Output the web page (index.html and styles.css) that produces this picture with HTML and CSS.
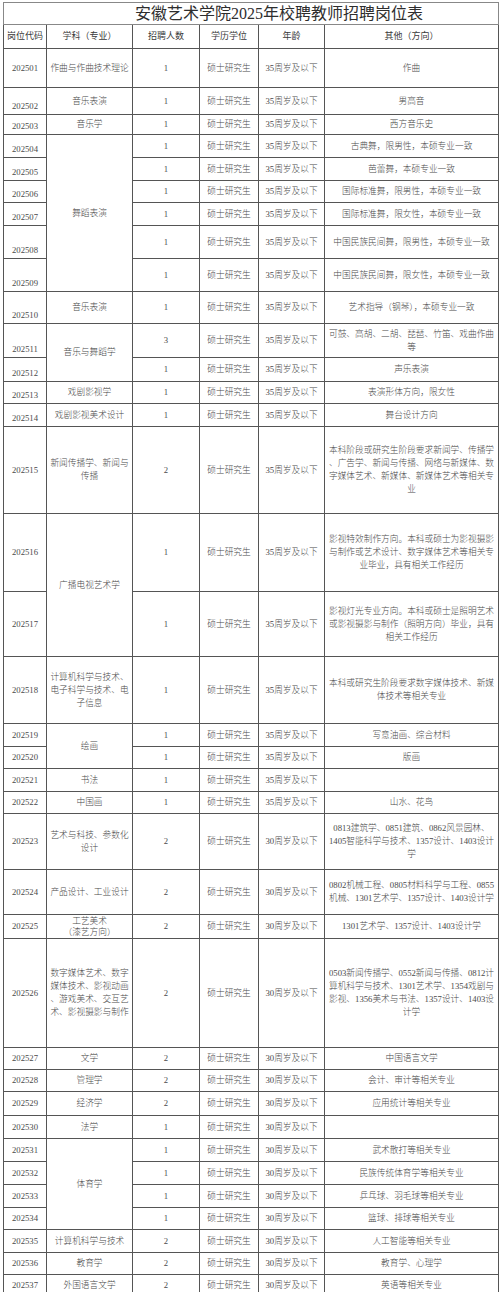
FILE: index.html
```html
<!DOCTYPE html>
<html lang="zh-CN">
<head>
<meta charset="utf-8">
<title>安徽艺术学院2025年校聘教师招聘岗位表</title>
<link rel="stylesheet" href="styles.css">
</head>
<body>
<table class="jobs">
<colgroup>
<col class="c-code"><col class="c-subj"><col class="c-num"><col class="c-deg"><col class="c-age"><col class="c-other">
</colgroup>
<tr class="h22 title-row"><td colspan="6" class="title">安徽艺术学院2025年校聘教师招聘岗位表</td></tr>
<tr class="h24 head"><td>岗位代码</td><td>学科（专业）</td><td>招聘人数</td><td>学历学位</td><td>年龄</td><td>其他（方向）</td></tr>
<tr class="h39"><td>202501</td><td>作曲与作曲技术理论</td><td>1</td><td>硕士研究生</td><td>35周岁及以下</td><td>作曲</td></tr>
<tr class="h27"><td class="bot">202502</td><td>音乐表演</td><td>1</td><td>硕士研究生</td><td>35周岁及以下</td><td>男高音</td></tr>
<tr class="h20"><td class="bot">202503</td><td>音乐学</td><td>1</td><td>硕士研究生</td><td>35周岁及以下</td><td>西方音乐史</td></tr>
<tr class="h23"><td class="bot">202504</td><td rowspan="6">舞蹈表演</td><td>1</td><td>硕士研究生</td><td>35周岁及以下</td><td>古典舞，限男性，本硕专业一致</td></tr>
<tr class="h23"><td class="bot">202505</td><td>1</td><td>硕士研究生</td><td>35周岁及以下</td><td>芭蕾舞，本硕专业一致</td></tr>
<tr class="h22"><td class="bot">202506</td><td>1</td><td>硕士研究生</td><td>35周岁及以下</td><td>国际标准舞，限男性，本硕专业一致</td></tr>
<tr class="h23"><td class="bot">202507</td><td>1</td><td>硕士研究生</td><td>35周岁及以下</td><td>国际标准舞，限女性，本硕专业一致</td></tr>
<tr class="h33"><td class="bot">202508</td><td>1</td><td>硕士研究生</td><td>35周岁及以下</td><td>中国民族民间舞，限男性，本硕专业一致</td></tr>
<tr class="h33"><td class="bot">202509</td><td>1</td><td>硕士研究生</td><td>35周岁及以下</td><td>中国民族民间舞，限女性，本硕专业一致</td></tr>
<tr class="h32"><td class="bot">202510</td><td>音乐表演</td><td>1</td><td>硕士研究生</td><td>35周岁及以下</td><td>艺术指导（钢琴），本硕专业一致</td></tr>
<tr class="h34"><td class="bot">202511</td><td rowspan="2">音乐与舞蹈学</td><td>3</td><td>硕士研究生</td><td>35周岁及以下</td><td>可鼓、高胡、二胡、琵琶、竹笛、戏曲作曲<br>等</td></tr>
<tr class="h24"><td class="bot">202512</td><td>1</td><td>硕士研究生</td><td>35周岁及以下</td><td>声乐表演</td></tr>
<tr class="h22"><td class="bot">202513</td><td>戏剧影视学</td><td>1</td><td>硕士研究生</td><td>35周岁及以下</td><td>表演形体方向，限女性</td></tr>
<tr class="h23"><td class="bot">202514</td><td>戏剧影视美术设计</td><td>1</td><td>硕士研究生</td><td>35周岁及以下</td><td>舞台设计方向</td></tr>
<tr class="h87"><td>202515</td><td>新闻传播学、新闻与<br>传播</td><td>2</td><td>硕士研究生</td><td>35周岁及以下</td><td>本科阶段或研究生阶段要求新闻学、传播学<br>、广告学、新闻与传播、网络与新媒体、数<br>字媒体艺术、新媒体、新媒体艺术等相关专<br>业</td></tr>
<tr class="h78"><td>202516</td><td rowspan="2">广播电视艺术学</td><td>1</td><td>硕士研究生</td><td>35周岁及以下</td><td>影视特效制作方向。本科或硕士为影视摄影<br>与制作或艺术设计、数字媒体艺术等相关专<br>业毕业，具有相关工作经历</td></tr>
<tr class="h65"><td>202517</td><td>1</td><td>硕士研究生</td><td>35周岁及以下</td><td>影视灯光专业方向。本科或硕士是照明艺术<br>或影视摄影与制作（照明方向）毕业，具有<br>相关工作经历</td></tr>
<tr class="h67"><td>202518</td><td>计算机科学与技术、<br>电子科学与技术、电<br>子信息</td><td>1</td><td>硕士研究生</td><td>35周岁及以下</td><td>本科或研究生阶段要求数字媒体技术、新媒<br>体技术等相关专业</td></tr>
<tr class="h23"><td>202519</td><td rowspan="2">绘画</td><td>1</td><td>硕士研究生</td><td>35周岁及以下</td><td>写意油画、综合材料</td></tr>
<tr class="h22"><td>202520</td><td>1</td><td>硕士研究生</td><td>35周岁及以下</td><td>版画</td></tr>
<tr class="h23"><td>202521</td><td>书法</td><td>1</td><td>硕士研究生</td><td>35周岁及以下</td><td></td></tr>
<tr class="h22"><td>202522</td><td>中国画</td><td>1</td><td>硕士研究生</td><td>35周岁及以下</td><td>山水、花鸟</td></tr>
<tr class="h56"><td>202523</td><td>艺术与科技、参数化<br>设计</td><td>2</td><td>硕士研究生</td><td>30周岁及以下</td><td>0813建筑学、0851建筑、0862风景园林、<br>1405智能科学与技术、1357设计、1403设计<br>学</td></tr>
<tr class="h45"><td>202524</td><td>产品设计、工业设计</td><td>2</td><td>硕士研究生</td><td>30周岁及以下</td><td>0802机械工程、0805材料科学与工程、0855<br>机械、1301艺术学、1357设计、1403设计学</td></tr>
<tr class="h24"><td>202525</td><td class="tight">工艺美术<br>（漆艺方向）</td><td>2</td><td>硕士研究生</td><td>30周岁及以下</td><td>1301艺术学、1357设计、1403设计学</td></tr>
<tr class="h109"><td>202526</td><td>数字媒体艺术、数字<br>媒体技术、影视动画<br>、游戏美术、交互艺<br>术、影视摄影与制作</td><td>2</td><td>硕士研究生</td><td>30周岁及以下</td><td>0503新闻传播学、0552新闻与传播、0812计<br>算机科学与技术、1301艺术学、1354戏剧与<br>影视、1356美术与书法、1357设计、1403设<br>计学</td></tr>
<tr class="h22"><td>202527</td><td>文学</td><td>2</td><td>硕士研究生</td><td>30周岁及以下</td><td>中国语言文学</td></tr>
<tr class="h22"><td>202528</td><td>管理学</td><td>2</td><td>硕士研究生</td><td>30周岁及以下</td><td>会计、审计等相关专业</td></tr>
<tr class="h24"><td>202529</td><td>经济学</td><td>2</td><td>硕士研究生</td><td>30周岁及以下</td><td>应用统计等相关专业</td></tr>
<tr class="h23"><td>202530</td><td>法学</td><td>1</td><td>硕士研究生</td><td>30周岁及以下</td><td></td></tr>
<tr class="h23"><td>202531</td><td rowspan="4">体育学</td><td>1</td><td>硕士研究生</td><td>30周岁及以下</td><td>武术散打等相关专业</td></tr>
<tr class="h23"><td>202532</td><td>1</td><td>硕士研究生</td><td>30周岁及以下</td><td>民族传统体育学等相关专业</td></tr>
<tr class="h23"><td>202533</td><td>1</td><td>硕士研究生</td><td>30周岁及以下</td><td>乒乓球、羽毛球等相关专业</td></tr>
<tr class="h22"><td>202534</td><td>1</td><td>硕士研究生</td><td>30周岁及以下</td><td>篮球、排球等相关专业</td></tr>
<tr class="h23"><td>202535</td><td>计算机科学与技术</td><td>2</td><td>硕士研究生</td><td>30周岁及以下</td><td>人工智能等相关专业</td></tr>
<tr class="h22"><td>202536</td><td>教育学</td><td>2</td><td>硕士研究生</td><td>30周岁及以下</td><td>教育学、心理学</td></tr>
<tr class="h17 last"><td>202537</td><td>外国语言文学</td><td>2</td><td>硕士研究生</td><td>30周岁及以下</td><td>英语等相关专业</td></tr>
</table>
</body>
</html>
```
FILE: styles.css
```css
html, body {
  margin: 0;
  padding: 0;
  background: #ffffff;
}

body {
  font-family: "Liberation Serif", "Noto Sans CJK SC", serif;
  color: #4a4a4a;
  overflow: hidden;
}

.jobs {
  margin: 2px 0 0 3px;
  width: 495px;
  table-layout: fixed;
  border-collapse: collapse;
  font-size: 8.7px;
  font-weight: 300;
  line-height: 13px;
}

.c-code { width: 43px; }
.c-subj { width: 86px; }
.c-num { width: 67px; }
.c-deg { width: 59px; }
.c-age { width: 66px; }
.c-other { width: 174px; }

.jobs td {
  border: 1px solid #555555;
  padding: 0 1px;
  text-align: center;
  vertical-align: middle;
  white-space: nowrap;
  overflow: hidden;
}

.jobs td.bot {
  vertical-align: bottom;
  padding-bottom: 1px;
}

.jobs td.tight {
  line-height: 11px;
}

.title-row td.title {
  font-size: 16px;
  font-weight: 400;
  color: #2e2e2e;
  padding-left: 57px;
  line-height: 20px;
  border-color: #888888;
}

.head td {
  font-size: 9px;
  font-weight: 400;
  color: #3a3a3a;
}

.last td {
  border-bottom: none;
  vertical-align: bottom;
}

.h17 { height: 17px; }
.h20 { height: 20px; }
.h22 { height: 22px; }
.h23 { height: 23px; }
.h24 { height: 24px; }
.h27 { height: 27px; }
.h32 { height: 32px; }
.h33 { height: 33px; }
.h34 { height: 34px; }
.h39 { height: 39px; }
.h45 { height: 45px; }
.h56 { height: 56px; }
.h65 { height: 65px; }
.h67 { height: 67px; }
.h78 { height: 78px; }
.h87 { height: 87px; }
.h109 { height: 109px; }
```
